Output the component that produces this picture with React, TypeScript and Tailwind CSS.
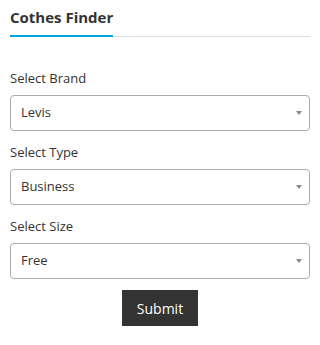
import React from "react";

const FIELDS = [
  { label: "Select Brand", value: "Levis", options: ["Levis", "Wrangler", "Lee"] },
  { label: "Select Type", value: "Business", options: ["Business", "Casual", "Sport"] },
  { label: "Select Size", value: "Free", options: ["Free", "S", "M", "L", "XL"] },
];

function SelectField({ label, value, options }: { label: string; value: string; options: string[] }) {
  return (
    <div className="flex flex-col">
      <label className="text-[13px] leading-5 text-[#333]">{label}</label>
      <div className="relative mt-[7px]">
        <select
          defaultValue={value}
          className="w-full h-9 appearance-none rounded-[4px] border border-[#aaa] bg-white pl-[10px] pr-6 text-[13px] text-[#333] outline-none"
        >
          {options.map((o) => (
            <option key={o}>{o}</option>
          ))}
        </select>
        {/* caret */}
        <span className="pointer-events-none absolute right-[8px] top-1/2 -translate-y-1/2 border-x-[3px] border-t-[4px] border-x-transparent border-t-[#888]" />
      </div>
    </div>
  );
}

export default function App() {
  return (
    <div className="w-[320px] h-[345px] bg-white px-[10px] font-['Open_Sans',sans-serif]">
      <div className="pt-[5px] border-b border-[#ddd]">
        <span className="inline-block pb-[8px] -mb-px border-b-2 border-[#00a9e0] text-[15px] leading-5 font-bold text-[#333]">
          Cothes Finder
        </span>
      </div>

      <form className="mt-[31px] flex flex-col gap-[11px]" onSubmit={(e) => e.preventDefault()}>
        {FIELDS.map((f) => (
          <SelectField key={f.label} {...f} />
        ))}
        <div className="flex justify-center">
          <button type="submit" className="h-9 w-[76px] bg-[#333] text-[14px] text-white">
            Submit
          </button>
        </div>
      </form>
    </div>
  );
}
